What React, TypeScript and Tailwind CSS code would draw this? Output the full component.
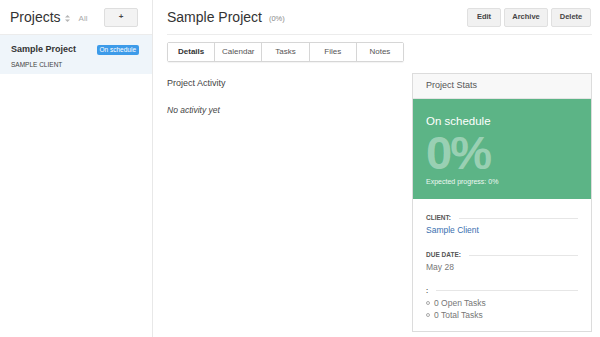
import React from "react";

const tabs = ["Details", "Calendar", "Tasks", "Files", "Notes"];
const actions = [
  { label: "Edit", w: "w-[34px]" },
  { label: "Archive", w: "w-[44px]" },
  { label: "Delete", w: "w-[40px]" },
];

const SortIcon = () => (
  <svg width="5" height="7" viewBox="0 0 5 7" className="mt-[3px]">
    <path d="M2.5 0 L5 2.5 H0 Z" fill="#b5b5b5" />
    <path d="M2.5 7 L5 4.5 H0 Z" fill="#b5b5b5" />
  </svg>
);

const Label = ({ text }: { text: string }) => (
  <div className="flex items-center gap-[8px]">
    <span className="text-[6.5px] font-bold uppercase text-[#555] leading-none">{text}</span>
    <div className="flex-1 h-px bg-[#e6e6e6]" />
  </div>
);

const App = () => {
  return (
    <div
      className="flex h-[337px] w-[600px] bg-white text-[#333] overflow-hidden"
      style={{ fontFamily: '"Liberation Sans", Arial, sans-serif' }}
    >
      {/* Sidebar */}
      <aside className="w-[153px] shrink-0 border-r border-[#e8e8e8] flex flex-col">
        <div className="h-[35px] flex items-center pl-[10px] pr-[14px] border-b border-[#ececec]">
          <span className="text-[14px] text-[#333] leading-none">Projects</span>
          <span className="ml-[4px]">
            <SortIcon />
          </span>
          <span className="ml-[9px] mt-[3px] text-[8px] text-[#aaa]">All</span>
          <button className="ml-auto w-[34px] h-[19px] rounded-[2px] bg-[#f3f3f3] border border-[#dedede] text-[8px] font-bold text-[#444] leading-none">
            +
          </button>
        </div>
        <div className="h-[39px] bg-[#eff5fa] pl-[11px] pr-[13px] pt-[8px]">
          <div className="flex items-center justify-between">
            <span className="text-[9px] font-bold text-[#333]">Sample Project</span>
            <span className="bg-[#3d9be9] text-white text-[6.5px] leading-none px-[3px] py-[2px] rounded-[2px]">
              On schedule
            </span>
          </div>
          <div className="mt-[3px] text-[6.5px] text-[#444] uppercase">Sample Client</div>
        </div>
      </aside>

      {/* Main */}
      <main className="flex-1 flex flex-col pl-[14px] pr-[8px]">
        <header className="h-[35px] flex items-center border-b border-[#ececec]">
          <h1 className="text-[14px] text-[#333] leading-none">Sample Project</h1>
          <span className="ml-[7px] mt-[3px] text-[7.5px] text-[#888]">(0%)</span>
          <div className="ml-auto flex gap-[3px] mr-px">
            {actions.map((b) => (
              <button
                key={b.label}
                className={`${b.w} h-[19px] rounded-[2px] bg-[#f1f1f1] border border-[#e0e0e0] text-[7.5px] font-bold text-[#444]`}
              >
                {b.label}
              </button>
            ))}
          </div>
        </header>

        <div className="mt-[7px] flex w-[237px] h-[20px] border border-[#d6d6d6] rounded-[2px] shadow-[0_1px_1px_rgba(0,0,0,0.05)]">
          {tabs.map((t, i) => (
            <div
              key={t}
              className={`flex-1 flex items-center justify-center text-[8px] ${
                i > 0 ? "border-l border-[#d6d6d6]" : ""
              } ${i === 0 ? "font-bold text-[#333] bg-white" : "text-[#555] bg-white"}`}
            >
              {t}
            </div>
          ))}
        </div>

        <div className="flex flex-1 mt-[11px]">
          <section className="flex-1 pt-[4px]">
            <h2 className="text-[9px] text-[#444]">Project Activity</h2>
            <p className="mt-[13px] text-[8.5px] italic text-[#444]">No activity yet</p>
          </section>

          <section className="w-[180px] h-[259px] border border-[#dcdcdc] flex flex-col">
            <div className="h-[25px] bg-[#f8f8f8] border-b border-[#e4e4e4] flex items-center pl-[13px]">
              <span className="text-[9px] text-[#555]">Project Stats</span>
            </div>
            <div className="h-[100px] bg-[#5cb486] pl-[13px] pt-[17px] text-white">
              <div className="text-[11.5px] leading-none">On schedule</div>
              <div className="mt-[1px] text-[47px] font-bold leading-none tracking-[-2px] text-white/40">
                0%
              </div>
              <div className="mt-[1px] text-[7px] text-white/90">Expected progress: 0%</div>
            </div>
            <div className="pl-[13px] pr-[13px] pt-[16px]">
              <Label text="Client:" />
              <div className="mt-[2px] text-[8.5px] text-[#3a6fb0]">Sample Client</div>
              <div className="mt-[16px]">
                <Label text="Due Date:" />
              </div>
              <div className="mt-[2px] text-[8.5px] text-[#777]">May 28</div>
              <div className="mt-[14px]">
                <Label text=":" />
              </div>
              <ul className="mt-[3px] text-[8.5px] text-[#777] leading-[12px]">
                <li className="flex items-center gap-[4px]">
                  <span className="w-[4px] h-[4px] rounded-full border border-[#aaa]" />0 Open Tasks
                </li>
                <li className="flex items-center gap-[4px]">
                  <span className="w-[4px] h-[4px] rounded-full border border-[#aaa]" />0 Total Tasks
                </li>
              </ul>
            </div>
          </section>
        </div>
      </main>
    </div>
  );
};

export default App;
